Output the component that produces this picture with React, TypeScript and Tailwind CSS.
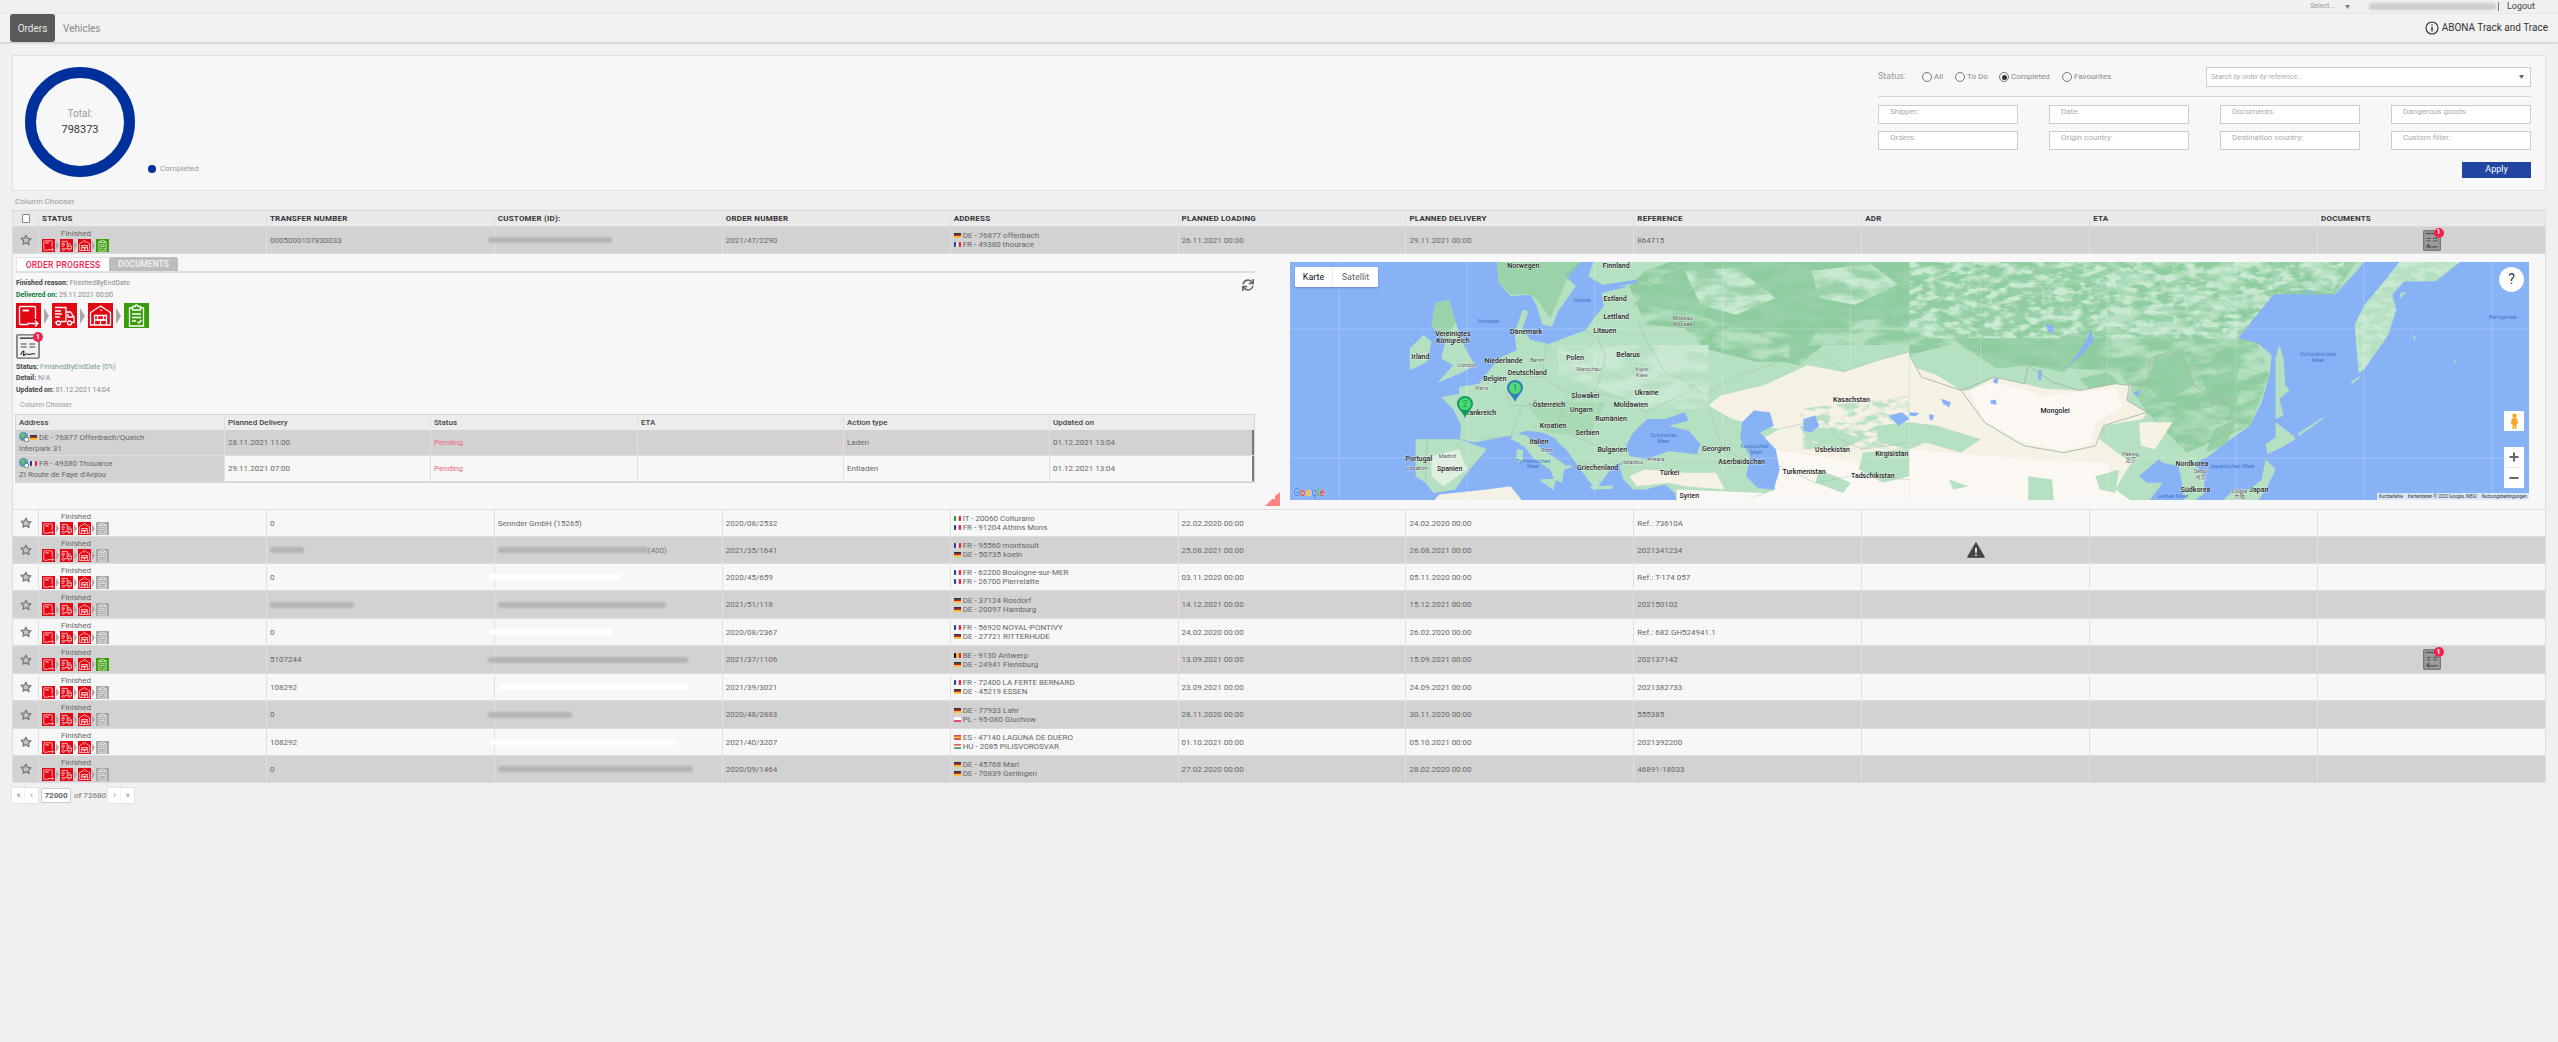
import React from "react";
import { FaSync } from "react-icons/fa";

type Kind = "box" | "truck" | "house" | "clip";

function StepIcon({ kind, color, size }: { kind: Kind; color: string; size: number }) {
  return (
    <svg viewBox="0 0 25 25" width={size} height={size} className="block shrink-0">
      <rect width="25" height="25" fill={color} />
      <g fill="none" stroke="#fff" strokeWidth="1.3">
        {kind === "box" && (
          <>
            <path d="M19.5 16V4.5a1 1 0 0 0-1-1H4.5a1 1 0 0 0-1 1v16a1 1 0 0 0 1 1H12" />
            <path d="M6.5 7.5H13" strokeWidth="1.8" />
            <path d="M11.5 20.5H22M19 17.5l3 3-3 3" />
          </>
        )}
        {kind === "truck" && (
          <>
            <path d="M3 4.5h11v14" />
            <path d="M3 8h6M3 11h7M3 14h5" />
            <path d="M14 9h4.5l3.5 5v5.5h-2M14 18.5H9M3 19.5h1" />
            <circle cx="6.5" cy="20" r="2" />
            <circle cx="17.5" cy="20" r="2" />
            <path d="M16 11v3h5" />
          </>
        )}
        {kind === "house" && (
          <>
            <path d="M2.5 22V9.5L12.5 3l10 6.5V22z" />
            <path d="M6.5 22V12.5h12V22" />
            <path d="M9.5 12.5V17h6v-4.500" />
            <path d="M6.500 17h6v5M12.500 17h6" />
            <path d="M12.500 6.800l1.500 1" />
          </>
        )}
        {kind === "clip" && (
          <>
            <path d="M8.500 5H5.500v18h14V5h-3" />
            <path d="M8.500 3.500h2.500a1.500 1.500 0 0 1 3 0h2.500V7h-8z" />
            <path d="M8 11h9M8 14.500h9M8 18h4M13.500 18.500l1.500 1.500 2.500-3" />
          </>
        )}
      </g>
    </svg>
  );
}

function Chevron({ w, h }: { w: number; h: number }) {
  return (
    <svg viewBox="0 0 5 16" width={w} height={h} className="block shrink-0">
      <path d="M0 0l5 8-5 8z" fill="#a8a8a8" />
    </svg>
  );
}

function StatusCell({ last }: { last: string }) {
  return (
    <div className="flex flex-col pl-[3px] pt-[2px]">
      <div className="ml-[19px] h-[10px] text-[8px] leading-[10px] text-[#666]">Finished</div>
      <div className="flex items-center gap-[1px]">
        <StepIcon kind="box" color="#e30613" size={13} />
        <Chevron w={3} h={9} />
        <StepIcon kind="truck" color="#e30613" size={13} />
        <Chevron w={3} h={9} />
        <StepIcon kind="house" color="#e30613" size={13} />
        <Chevron w={3} h={9} />
        <StepIcon kind="clip" color={last} size={13} />
      </div>
    </div>
  );
}

function Star() {
  return (
    <div className="flex items-center justify-center">
      <svg viewBox="0 0 24 24" width="12" height="12">
        <path
          d="M12 2.500l3 6.300 6.900.9-5 4.800 1.200 6.900L12 17.200 5.900 20.400l1.200-6.900-5-4.800 6.900-.9z"
          fill="#c4c4c4"
          stroke="#777"
          strokeWidth="2.400"
          strokeLinejoin="round"
        />
      </svg>
    </div>
  );
}

function Flag({ c }: { c: string }) {
  const v: Record<string, string[]> = {
    fr: ["#1d3f9e", "#fff", "#e0263a"],
    it: ["#1f9a46", "#fff", "#d8262e"],
    be: ["#111", "#f5d22c", "#d8262e"],
  };
  const h: Record<string, string[]> = {
    de: ["#111", "#d21f1f", "#f5c518"],
    pl: ["#fff", "#fff", "#d8264a"],
    es: ["#d8262e", "#f5c518", "#d8262e"],
    hu: ["#c9463e", "#fff", "#3f8a55"],
  };
  return (
    <svg viewBox="0 0 9 6" width="7" height="5" className="mr-[2px] inline-block shrink-0">
      {v[c] && v[c].map((f, i) => <rect key={i} x={i * 3} width="3" height="6" fill={f} />)}
      {h[c] && h[c].map((f, i) => <rect key={i} y={i * 2} width="9" height="2" fill={f} />)}
    </svg>
  );
}

function Smear({ w, color, ml = 0, suffix }: { w: string; color: string; ml?: string | number; suffix?: string }) {
  return (
    <div className="flex items-center">
      <span className={`${w} ${color} h-[6px] rounded-[3px] blur-[1px]`} style={{ marginLeft: ml as number }} />
      {suffix && <span className="text-[8px] text-[#777]">{suffix}</span>}
    </div>
  );
}

function DocIcon({ w, h, dark }: { w: number; h: number; dark?: boolean }) {
  return (
    <div className="relative inline-block" style={{ width: w, height: h }}>
      <svg viewBox="0 0 25 30" width={w} height={h} preserveAspectRatio="none" className="block">
        <rect x="1" y="1" width="23" height="28" rx="1" fill={dark ? "#9c9c9c" : "#f2f2f2"} stroke="#666" strokeWidth="1.500" />
        <path d="M4 5h17" stroke="#555" strokeWidth="2" />
        <path d="M5 12h6M14 12h6M5 15.500h6M14 15.500h6" stroke="#444" strokeWidth="1.200" />
        <path d="M5 25c2-6 4-6 3-1s3-2 4 0 3-1 8 0" stroke="#222" strokeWidth="1.200" fill="none" />
      </svg>
      <span className="absolute -right-[3px] -top-[2px] flex h-[10px] w-[10px] items-center justify-center rounded-full bg-[#f5204e] text-[7px] font-bold leading-none text-white">
        1
      </span>
    </div>
  );
}

type Row = {
  t?: string;
  tw?: string;
  c?: string;
  cw?: string;
  cc?: string;
  cml?: number;
  s?: string;
  o: string;
  a: [string, string][];
  l: string;
  d: string;
  r: string;
  h: string;
  last: string;
  warn?: boolean;
  doc?: boolean;
};

const gray = "#a8a8a8";
const rows: Row[] = [
  { t: "0", c: "Sennder GmbH (15265)", o: "2020/08/2532", a: [["it", "IT - 20060 Colturano"], ["fr", "FR - 91204 Athins Mons"]], l: "22.02.2020 00:00", d: "24.02.2020 00:00", r: "Ref.: 73610A", h: "h-[27px]", last: gray },
  { tw: "w-[34px]", cw: "w-[150px]", cc: "bg-[#b4b4b4]", s: "(400)", cml: 0, o: "2021/35/1641", a: [["fr", "FR - 95560 montsoult"], ["de", "DE - 50735 koeln"]], l: "25.08.2021 00:00", d: "26.08.2021 00:00", r: "2021341234", h: "h-[27px]", last: gray, warn: true },
  { t: "0", cw: "w-[132px]", cc: "bg-[#ffffff]", cml: -9, o: "2020/45/659", a: [["fr", "FR - 62200 Boulogne-sur-MER"], ["fr", "FR - 26700 Pierrelatte"]], l: "03.11.2020 00:00", d: "05.11.2020 00:00", r: "Ref.: T-174 057", h: "h-[27px]", last: gray },
  { tw: "w-[84px]", cw: "w-[168px]", cc: "bg-[#b4b4b4]", cml: 0, o: "2021/51/118", a: [["de", "DE - 37124 Rosdorf"], ["de", "DE - 20097 Hamburg"]], l: "14.12.2021 00:00", d: "15.12.2021 00:00", r: "202150102", h: "h-[28px]", last: gray },
  { t: "0", cw: "w-[124px]", cc: "bg-[#ffffff]", cml: -10, o: "2020/08/2367", a: [["fr", "FR - 56920 NOYAL-PONTIVY"], ["de", "DE - 27721 RITTERHUDE"]], l: "24.02.2020 00:00", d: "26.02.2020 00:00", r: "Ref.: 682.GH524941.1", h: "h-[27px]", last: gray },
  { t: "5107244", cw: "w-[200px]", cc: "bg-[#b4b4b4]", cml: -10, o: "2021/37/1106", a: [["be", "BE - 9130 Antwerp"], ["de", "DE - 24941 Flensburg"]], l: "13.09.2021 00:00", d: "15.09.2021 00:00", r: "202137142", h: "h-[28px]", last: "#3a9c0c", doc: true },
  { t: "108292", cw: "w-[190px]", cc: "bg-[#ffffff]", cml: 0, o: "2021/39/3021", a: [["fr", "FR - 72400 LA FERTE BERNARD"], ["de", "DE - 45219 ESSEN"]], l: "23.09.2021 00:00", d: "24.09.2021 00:00", r: "2021382733", h: "h-[27px]", last: gray },
  { t: "0", cw: "w-[84px]", cc: "bg-[#b4b4b4]", cml: -10, o: "2020/48/2883", a: [["de", "DE - 77933 Lahr"], ["pl", "PL - 95-080 Gluchow"]], l: "28.11.2020 00:00", d: "30.11.2020 00:00", r: "555385", h: "h-[28px]", last: gray },
  { t: "108292", cw: "w-[188px]", cc: "bg-[#ffffff]", cml: -8, o: "2021/40/3207", a: [["es", "ES - 47140 LAGUNA DE DUERO"], ["hu", "HU - 2085 PILISVOROSVAR"]], l: "01.10.2021 00:00", d: "05.10.2021 00:00", r: "2021392200", h: "h-[27px]", last: gray },
  { t: "0", cw: "w-[195px]", cc: "bg-[#b4b4b4]", cml: 0, o: "2020/09/1464", a: [["de", "DE - 45768 Marl"], ["de", "DE - 70839 Gerlingen"]], l: "27.02.2020 00:00", d: "28.02.2020 00:00", r: "46891-18033", h: "h-[27px]", last: gray },
];

const cols = "grid grid-cols-[25px_repeat(11,minmax(0,1fr))]";
const cell = "flex items-center border-l border-[#dfe0e4] pl-[3px] text-[8px] leading-[9px] text-[#666]";
const cellBlank = "border-l border-[#dfe0e4]";

function Address({ a }: { a: [string, string][] }) {
  return (
    <div className={`${cell} flex-col !items-start justify-center`}>
      {a.map(([f, t]) => (
        <div key={t} className="flex items-center whitespace-nowrap">
          <Flag c={f} />
          {t}
        </div>
      ))}
    </div>
  );
}

function TableRow({ row, dark }: { row: Row; dark: boolean }) {
  return (
    <div className={`${cols} ${row.h} ${dark ? "bg-[#d2d2d2]" : "bg-[#f7f7f7]"} border-b border-[#dcdde2]`}>
      <Star />
      <div className={cellBlank}>
        <StatusCell last={row.last} />
      </div>
      <div className={cell}>{row.tw ? <span className={`${row.tw} h-[6px] rounded-[3px] bg-[#b4b4b4] blur-[1px]`} /> : row.t}</div>
      <div className={cell}>
        {row.c ? row.c : <Smear w={row.cw!} color={row.cc!} ml={row.cml} suffix={row.s} />}
      </div>
      <div className={cell}>{row.o}</div>
      <Address a={row.a} />
      <div className={cell}>{row.l}</div>
      <div className={cell}>{row.d}</div>
      <div className={cell}>{row.r}</div>
      <div className={`${cell} justify-center !pl-0`}>
        {row.warn && (
          <svg viewBox="0 0 24 22" width="18" height="18">
            <path d="M12 1.500L23 20.500H1z" fill="#444" stroke="#444" strokeWidth="1.500" strokeLinejoin="round" />
            <path d="M12 8v6.500M12 16.500v2" stroke="#fff" strokeWidth="2.200" />
          </svg>
        )}
      </div>
      <div className={cellBlank} />
      <div className={`${cell} justify-center !pl-0`}>{row.doc && <DocIcon w={18} h={21} dark />}</div>
    </div>
  );
}

type Label = [string, number, number, "b" | "g" | "w"];
const labels: Label[] = [
  ["Norwegen", 590, 12, "b"], ["Finnland", 825, 12, "b"], ["Ostsee", 738, 117, "w"], ["Estland", 822, 111, "b"],
  ["Lettland", 825, 165, "b"], ["Moskau", 993, 170, "g"], ["Москва", 993, 187, "g"], ["Nordsee", 502, 180, "w"],
  ["Dänemark", 597, 210, "b"], ["Litauen", 796, 208, "b"], ["Vereinigtes", 412, 216, "b"], ["Königreich", 412, 238, "b"],
  ["Irland", 330, 285, "b"], ["Niederlande", 540, 296, "b"], ["Berlin", 625, 296, "g"], ["Polen", 721, 287, "b"],
  ["Belarus", 855, 278, "b"], ["London", 448, 311, "g"], ["Warschau", 755, 322, "g"], ["Kyjiw", 890, 322, "g"],
  ["Kiew", 890, 340, "g"], ["Deutschland", 600, 334, "b"], ["Belgien", 518, 352, "b"], ["Paris", 485, 380, "g"],
  ["Ukraine", 902, 392, "b"], ["Slowakei", 747, 401, "b"], ["Österreich", 655, 429, "b"], ["Moldawien", 862, 429, "b"],
  ["Frankreich", 480, 453, "b"], ["Ungarn", 737, 445, "b"], ["Rumänien", 812, 472, "b"], ["Kroatien", 665, 491, "b"],
  ["Serbien", 752, 514, "b"], ["Schwarzes", 945, 521, "w"], ["Meer", 945, 538, "w"], ["Italien", 630, 540, "b"],
  ["Rom", 650, 565, "g"], ["Bulgarien", 815, 564, "b"], ["Georgien", 1078, 560, "b"], ["Kaspisches", 1175, 555, "w"],
  ["Meer", 1180, 573, "w"], ["Kasachstan", 1420, 413, "b"], ["Usbekistan", 1372, 564, "b"], ["Kirgisistan", 1522, 576, "b"],
  ["Aserbaidschan", 1142, 600, "b"], ["Portugal", 326, 590, "b"], ["Madrid", 398, 584, "g"], ["Spanien", 404, 620, "b"],
  ["Griechenland", 778, 619, "b"], ["Istanbul", 868, 602, "g"], ["Ankara", 925, 594, "g"], ["Türkei", 960, 632, "b"],
  ["Turkmenistan", 1300, 630, "b"], ["Tadschikistan", 1474, 641, "b"], ["Lissabon", 320, 621, "g"],
  ["Tyrrhenisches", 615, 598, "w"], ["Meer", 615, 615, "w"], ["Syrien", 1010, 702, "b"],
  ["Mongolei", 1935, 448, "b"], ["Ochotskisches", 2600, 279, "w"], ["Meer", 2600, 296, "w"], ["Beringmeer", 3068, 168, "w"],
  ["Peking", 2126, 577, "g"], ["北京", 2126, 595, "g"], ["Nordkorea", 2281, 606, "b"], ["Japanisches Meer", 2383, 614, "w"],
  ["Seoul", 2303, 629, "g"], ["서울", 2303, 646, "g"], ["Südkorea", 2290, 683, "b"], ["Osaka", 2401, 690, "g"],
  ["Japan", 2450, 683, "b"], ["大阪", 2401, 704, "g"], ["Gelbes Meer", 2233, 704, "w"],
];

function MapArt() {
  const land = "#b6e0c2";
  const dark = "#8fcda0";
  const lite = "#c9e9d3";
  const sand = "#f5f1e5";
  const pale = "#fbf8f3";
  const sea = "#87b3f6";
  return (
    <svg viewBox="0 0 3136 714" preserveAspectRatio="none" className="absolute -left-[1px] -top-[1px] h-[240px] w-[1241px] blur-[0.6px]">
      <defs>
        <filter id="mottle" x="0" y="0" width="100%" height="100%">
          <feTurbulence type="fractalNoise" baseFrequency="0.012 0.028" numOctaves="4" seed="7" result="n" />
          <feColorMatrix in="n" type="matrix" values="0 0 0 0 0 0 0 0 0 0 0 0 0 0 0 3.500 0 0 0 -1.100" result="a" />
          <feComposite in="SourceGraphic" in2="a" operator="in" />
        </filter>
        <filter id="mottleFine" x="0" y="0" width="100%" height="100%">
          <feTurbulence type="fractalNoise" baseFrequency="0.03 0.05" numOctaves="3" seed="11" result="n" />
          <feColorMatrix in="n" type="matrix" values="0 0 0 0 0 0 0 0 0 0 0 0 0 0 0 4 0 0 0 -1.700" result="a" />
          <feComposite in="SourceGraphic" in2="a" operator="in" />
        </filter>
      </defs>
      <rect width="3136" height="714" fill={sea} />
      <g fill={land}>
        <path d="M760 0H1568V714H980L975 690 950 665 900 680 870 680 845 650 835 610 850 595 820 610 800 640 775 680 755 650 730 610 700 560 660 520 640 510 600 505 560 520 510 530 470 540 432 530 435 490 415 440 385 405 430 395 430 375 480 365 500 335 530 290 575 265 570 215 590 145 605 150 590 200 610 235 650 245 750 205 770 170 795 135 790 95 860 75 800 75 755 45z" />
        <path d="M525 0L530 65 560 105 610 100 625 130 640 190 665 195 680 150 725 75 695 40 740 0z" />
        <path d="M370 125L405 115 420 180 445 260 470 310 440 330 375 362 415 310 385 290 395 240 360 190z" />
        <path d="M305 260L340 220 360 240 350 300 305 325z" />
        <path d="M320 530L430 530 500 560 450 630 420 680 365 690 345 660 320 640z" />
        <path d="M570 510L600 520 640 560 690 600 718 612 695 620 690 660 670 650 660 620 620 590 590 545 560 530z" />
        <path d="M632 650L675 648 668 682z" />
        <path d="M586 520L596 525 594 550 584 548zM575 560L592 562 590 600 575 598z" />
        <path d="M760 670L820 668 815 678 765 680z" />
      </g>
      <path d="M365 714L380 695 500 680 560 670 590 714z" fill={sand} />
      <path d="M360 580L430 560 450 620 390 670 360 640z" fill={pale} opacity="0.6" />
      <g fill={dark}>
        <path d="M525 0H740L700 60 660 170 630 120 610 100 560 100 530 65z" opacity="0.7" />
        <path d="M370 125L405 115 420 180 395 240 360 190z" opacity="0.7" />
        <path d="M600 420H800L760 520 650 510z" opacity="0.35" />
      </g>
      <path d="M870 130L900 90 960 60 1000 0H1568V170L1450 175 1340 190 1290 300 1265 300 1262 215 1150 200 1060 170 1000 150z" fill={dark} opacity="0.75" />
      <g fill={dark} filter="url(#mottle)">
        <path d="M860 75L900 30 970 0H1568V250L1350 250 1290 310 1250 300 1180 300 1050 260 1000 200 900 190z" />
      </g>
      <g fill={lite} filter="url(#mottle)">
        <path d="M1000 30L1130 20 1230 110 1130 160 1040 130z" />
        <path d="M1320 30L1470 10 1540 70 1430 130 1340 110z" />
        <path d="M680 250H1060V440H900L790 380 680 340z" />
      </g>
      <path d="M1568 270L1490 295 1400 330 1310 310 1200 370 1090 400 1060 430 1120 470 1190 490 1240 500 1180 540 1240 610 1230 680 1200 700 1150 714H1568z" fill={sand} />
      <path d="M1210 560L1330 580 1450 600 1568 560V714H1150L1230 680z" fill={pale} />
      <path d="M860 640L900 620 1000 630 1080 630 1100 680 1000 670 960 660 880 670z" fill={sand} />
      <path d="M980 680L1200 690 1150 714H980z" fill={pale} />
      <g fill={land}>
        <path d="M1290 490L1380 500 1450 530 1400 560 1310 530z" />
        <path d="M1450 570L1568 560V640L1500 660 1440 620z" />
        <path d="M1480 490L1568 480V560L1490 540z" />
        <path d="M1340 620L1420 660 1400 690 1330 660z" />
        <path d="M1000 600L1090 590 1110 650 1060 620z" />
      </g>
      <g fill={land} filter="url(#mottleFine)">
        <path d="M1290 440L1568 400V560H1300z" />
      </g>
      <g fill={sea}>
        <path d="M1145 480L1175 445 1215 450 1225 490 1190 510 1230 560 1240 620 1225 680 1185 675 1155 640 1165 580 1140 530z" />
        <path d="M1300 470L1330 460 1340 490 1320 510 1300 505z" />
        <path d="M1515 460L1550 450 1568 470 1540 490z" />
        <path d="M870 510L905 470 950 470 1000 450 1010 475 960 490 1010 505 1040 545 1030 575 960 565 905 590 860 580 852 550z" />
        <path d="M650 250L720 80 745 90 710 170 770 75 880 55 880 65 790 85 765 150 750 205z" />
        <path d="M640 530L670 525 725 600 700 610z" />
        <path d="M755 50L770 0H760L745 45z" />
      </g>

      <g transform="translate(1568,0)">
        <path d="M0 0H1150L1130 30 1075 100 1000 85 920 100 870 170 830 230 880 245 915 280 910 340 890 420 860 490 800 540 750 585 720 600 745 640 745 690 720 714H695L690 670 680 610 640 600 630 590 580 640 600 660 640 660 605 714H0z" fill={land} />
        <g fill={land}>
          <path d="M935 250L945 290 950 370 960 385 935 410 945 460 925 470 925 400 925 290z" />
          <path d="M925 480L970 520 975 530 940 555 905 575 900 545 925 525z" />
          <path d="M900 590L925 620 905 670 880 714H790L820 680 860 680 890 650z" />
          <path d="M1240 0L1200 60 1150 130 1125 190 1135 335 1150 320 1210 220 1230 145 1220 100 1250 60 1330 60 1395 0z" />
          <path d="M980 515L1050 462 1045 470 985 520zM1115 360L1140 340 1135 350 1118 365z" />
          <path d="M1240 95L1255 92 1240 112zM1270 215L1280 230 1275 235zM1370 285L1385 305 1380 305z" />
        </g>
        <path d="M0 0H500L530 110 450 190 470 260 390 330 300 310 220 320 120 240 60 175 0 170z" fill={dark} opacity="0.75" />
        <g fill={dark}>
          <path d="M430 350L500 330 530 360 460 390z" opacity="0.8" />
          <path d="M620 280L690 270 720 370 640 420 600 370z" opacity="0.8" />
          <path d="M740 350L830 320 830 420 760 430z" opacity="0.8" />
          <path d="M770 500L830 470 800 545 750 570z" opacity="0.8" />
        </g>
        <g fill={dark} filter="url(#mottle)">
          <path d="M0 0H1130L1075 100 920 100 870 170 830 230 880 245 910 340 860 490 700 570 600 450 530 330 300 310 100 250 0 280z" />
        </g>
        <g fill={lite} filter="url(#mottleFine)">
          <path d="M0 0H1100L1070 95 1000 85 920 100 870 170 830 230H0z" />
          <path d="M1240 0L1200 60 1150 130 1125 190 1135 335 1150 320 1210 220 1230 145 1220 100 1250 60 1330 60 1395 0z" />
        </g>
        <path d="M0 280L20 320 70 340 130 385 150 385 215 345 290 365 340 380 430 385 520 365 560 370 550 415 600 450 590 470 490 490 480 530 560 600 520 680 560 714H0z" fill={sand} />
        <path d="M150 385L215 360 340 400 520 380 540 430 470 480 460 540 390 565 290 540 190 480z" fill={pale} />
        <path d="M0 560L300 590 500 600 520 680 560 714H0z" fill={pale} />
        <path d="M580 480L665 480 620 560 585 550z" fill={sand} />
        <g fill={land}>
          <path d="M0 480L70 490 180 530 130 570 40 540 0 560z" />
          <path d="M300 640L360 650 365 714H300z" />
          <path d="M100 650L150 670 110 680z" />
          <path d="M470 640L530 620 520 690 480 680z" />
        </g>
        <path d="M460 205L465 240 430 285 385 325 410 300 440 250z" fill={sea} />
        <g fill={sea}>
          <path d="M212 350L225 348 222 365 212 362z" />
          <path d="M205 415L218 412 220 428 205 425zM80 410L105 420 100 435 85 425z" />
          <path d="M0 450L25 452 15 462 0 460zM50 455L62 460 58 475 50 470z" />
          <path d="M345 190L362 190 365 215 350 210z" />
          <path d="M565 390L585 385 575 405z" />
          <path d="M325 325L335 325 333 355 325 350z" />
        </g>
        <g fill="none" stroke="#a4b8a6" strokeWidth="2.500">
          <path d="M190 480L260 530 290 550 390 570 470 550 490 490 600 450 550 415 555 370 600 365 610 290 660 268 700 300 720 370 765 405 765 425 825 405 800 500 750 560" />
          <path d="M0 280L30 345 130 385 190 480" />
          <path d="M130 385L215 345 290 365 300 310 360 360 430 385 520 365 555 370" />
        </g>
      </g>

      <g fill="none" stroke="#a0b5a2" strokeWidth="1.500" opacity="0.8">
        <path d="M1568 270L1490 295 1400 330 1330 260 1120 350 1050 400 1020 370 950 330 900 230 880 170" />
        <path d="M650 245L640 345 700 390 770 390 790 340 800 280 780 230 750 205" />
        <path d="M640 345L580 340 550 390 560 430 600 430 700 420 770 390 850 410 900 450 1010 390" />
        <path d="M700 420L680 480 720 520 800 560 860 560" />
        <path d="M1060 430L1090 540 1140 590 1180 540" />
        <path d="M1240 500L1350 470 1390 530 1450 560 1568 540" />
        <path d="M1240 610L1330 660 1420 640 1568 650" />
        <path d="M350 530L345 660" />
        <path d="M480 530L560 520 590 430" />
      </g>
      <g stroke="#fff" strokeWidth="2" opacity="0.25">
        <path d="M127 0V714M450 0V714M773 0V714M1096 0V714M1419 0V714M1748 0V714M2068 0V714M2393 0V714M2716 0V714M3040 0V714" />
        <path d="M0 202H3136M0 586H3136" />
      </g>
    </svg>
  );
}

function MapLabels() {
  return (
    <svg viewBox="0 0 1239 238" className="absolute inset-0 h-full w-full">
      {labels.map(([t, x, y, k], i) => (
        <text
          key={i}
          x={x / 2.529}
          y={y / 3}
          textAnchor="middle"
          dominantBaseline="middle"
          fontSize={k === "b" ? 7 : 5.5}
          fontWeight={k === "b" ? 500 : 400}
          fill={k === "b" ? "#222" : k === "g" ? "#555" : "#3f76cf"}
          stroke={k === "w" ? "none" : "#ffffff"}
          strokeOpacity="0.55"
          strokeWidth="1"
          paintOrder="stroke"
        >
          {t}
        </text>
      ))}
    </svg>
  );
}

function Pin({ n, color, className }: { n: string; color: string; className: string }) {
  return (
    <div className={`absolute ${className}`}>
      <svg viewBox="0 0 16 22" width="16" height="22" className="block">
        <path d="M8 22C6 16 0 13 0 7.500a8 7.500 0 0 1 16 0C16 13 10 16 8 22z" fill={color} />
        <circle cx="8" cy="8" r="6" fill="#4fdc6e" />
        <text x="8" y="11" textAnchor="middle" fontSize="9" fill={color}>
          {n}
        </text>
      </svg>
    </div>
  );
}

function GMap() {
  return (
    <div className="relative h-[238px] w-[1239px] overflow-hidden bg-[#87b3f6]">
      <MapArt />
      <MapLabels />
      <Pin n="1" color="#2f7fc0" className="left-[217px] top-[118px]" />
      <Pin n="2" color="#129a62" className="left-[167px] top-[134px]" />
      <div className="absolute left-[5px] top-[5px] flex h-[20px] w-[83px] rounded-[1px] bg-white text-[9px] leading-[20px] shadow-[0_1px_2px_rgba(0,0,0,0.25)]">
        <div className="w-[38px] border-r border-[#eee] text-center text-[#111]">Karte</div>
        <div className="flex-1 text-center text-[#666]">Satellit</div>
      </div>
      <div className="absolute left-[1209px] top-[5px] flex h-[25px] w-[25px] items-center justify-center rounded-full bg-white text-[14px] text-[#333]">?</div>
      <div className="absolute left-[1214px] top-[149px] flex h-[20px] w-[20px] items-center justify-center bg-white">
        <svg viewBox="0 0 10 18" width="9" height="16">
          <circle cx="5" cy="3" r="2.500" fill="#f5a623" />
          <path d="M2 6h6l1 6H7.500L7 18H5.500L5 13l-.5 5H3l-.5-6H1z" fill="#f5a623" />
        </svg>
      </div>
      <div className="absolute left-[1214px] top-[185px] flex h-[41px] w-[20px] flex-col items-center bg-white">
        <svg viewBox="0 0 20 20" width="20" height="20">
          <path d="M10 5.500v9M5.500 10h9" stroke="#666" strokeWidth="2" />
        </svg>
        <div className="h-px w-[14px] bg-[#e6e6e6]" />
        <svg viewBox="0 0 20 20" width="20" height="20">
          <path d="M5.500 10h9" stroke="#666" strokeWidth="2" />
        </svg>
      </div>
      <div className="absolute bottom-0 right-0 flex h-[7px] items-center gap-[5px] whitespace-nowrap bg-white/70 px-[2px] text-[4.500px] leading-[7px] text-[#333]">
        <span>Kurzbefehle</span>
        <span>Kartendaten © 2022 Google, INEGI</span>
        <span>Nutzungsbedingungen</span>
      </div>
      <div className="absolute bottom-[2px] left-[3px] text-[10px] font-medium leading-[10px] [text-shadow:0_0_1px_#fff]">
        <span className="text-[#4285f4]">G</span>
        <span className="text-[#ea4335]">o</span>
        <span className="text-[#fbbc05]">o</span>
        <span className="text-[#4285f4]">g</span>
        <span className="text-[#34a853]">l</span>
        <span className="text-[#ea4335]">e</span>
      </div>
    </div>
  );
}

function Radio({ label, w, on }: { label: string; w: string; on?: boolean }) {
  return (
    <div className={`flex items-center ${w}`}>
      <span className="mr-[2px] flex h-[10px] w-[10px] items-center justify-center rounded-full border border-[#777]">
        {on && <span className="h-[5px] w-[5px] rounded-full bg-[#333]" />}
      </span>
      <span className="text-[8px] text-[#888]">{label}</span>
    </div>
  );
}

function Field({ label }: { label: string }) {
  return (
    <div className="h-[19px] w-[140px] border border-[#ccc] bg-white pl-[11px] text-[8px] leading-[12px] text-[#aaa]">{label}</div>
  );
}

const innerCols = "grid grid-cols-[208px_206px_207px_206px_206px_1fr]";
const innerCell = "flex items-center border-l border-[#dfe0e4] pl-[3px]";

function InnerAddr({ flag, top, bottom }: { flag: string; top: string; bottom: string }) {
  return (
    <div className="flex flex-col justify-center gap-[2px] bg-[#d2d2d2] pl-[3px] text-[8px] leading-[9px] text-[#666]">
      <div className="flex items-center whitespace-nowrap">
        <svg viewBox="0 0 10 10" width="10" height="10" className="mr-[1px] shrink-0">
          <circle cx="4.500" cy="4.500" r="4.500" fill="#4f9fb0" />
          <path d="M1 3l3-2 2 2-2 3z" fill="#7dbb6a" />
          <circle cx="7.500" cy="7.500" r="2.300" fill="#fff" stroke="#555" strokeWidth="0.700" />
        </svg>
        <Flag c={flag} />
        {top}
      </div>
      <div>{bottom}</div>
    </div>
  );
}

function InnerRow({ dark, addr, date, action }: { dark: boolean; addr: React.ReactNode; date: string; action: string }) {
  return (
    <div className={`${innerCols} h-[26px] border-b border-[#dcdde2] text-[8px] text-[#666] ${dark ? "bg-[#d2d2d2]" : "bg-[#f7f7f7]"}`}>
      {addr}
      <div className={innerCell}>{date}</div>
      <div className={`${innerCell} text-[#f0677f]`}>Pending</div>
      <div className={innerCell} />
      <div className={innerCell}>{action}</div>
      <div className={`${innerCell} border-r-[2px] border-r-[#7a7a7a]`}>01.12.2021 13:04</div>
    </div>
  );
}

function OrderProgress() {
  return (
    <div className="flex h-[256px] border-b border-[#dcdde2] bg-[#f7f7f7]">
      <div className="ml-[2px] w-[1240px] pt-[3px]">
        <div className="flex h-[16px] items-stretch border-b-2 border-[#dfdfe3]">
          <div className="ml-[1px] w-[93px] border-l border-t border-[#e6e6e6] bg-white text-center text-[8.500px] font-medium leading-[14px] tracking-[0.2px] text-[#f5204e]">ORDER PROGRESS</div>
          <div className="w-[69px] rounded-t-[2px] bg-[#bdbdbd] text-center text-[8.500px] font-bold leading-[14px] text-[#eee]">DOCUMENTS</div>
        </div>
        <div className="flex items-start justify-between pl-[1px] pr-[1px]">
          <div className="text-[7px] text-[#888]">
            <div className="mt-[5px] h-[11px] leading-[11px]">
              <span className="font-bold text-[#444]">Finished reason: </span>FinishedByEndDate
            </div>
            <div className="mt-[1px] h-[11px] leading-[11px]">
              <span className="font-bold text-[#0b7a3b]">Delivered on: </span>29.11.2021 00:00
            </div>
            <div className="mt-[2px] flex items-center gap-[3px]">
              <StepIcon kind="box" color="#e30613" size={25} />
              <Chevron w={5} h={16} />
              <StepIcon kind="truck" color="#e30613" size={25} />
              <Chevron w={5} h={16} />
              <StepIcon kind="house" color="#e30613" size={25} />
              <Chevron w={5} h={16} />
              <StepIcon kind="clip" color="#3a9c0c" size={25} />
            </div>
            <div className="mt-[6px] h-[25px]">
              <DocIcon w={24} h={25} />
            </div>
            <div className="mt-[3px] h-[11px] leading-[11px]">
              <span className="font-bold text-[#444]">Status: </span>
              <span className="text-[#6f9d88]">FinishedByEndDate (0%)</span>
            </div>
            <div className="h-[11px] leading-[11px]">
              <span className="font-bold text-[#444]">Detail: </span>
              <span className="text-[#7d8fa8]">N/A</span>
            </div>
            <div className="h-[12px] leading-[12px]">
              <span className="font-bold text-[#444]">Updated on: </span>01.12.2021 14:04
            </div>
          </div>
          <div className="mt-[6px] text-[#666]">
            <FaSync size={12} />
          </div>
        </div>
        <div className="mt-[5px] h-[9px] pl-[5px] text-[7px] leading-[9px] text-[#999]">Column Chooser</div>
        <div className="mt-[4px] border border-[#d4d4d8]">
          <div className={`${innerCols} h-[15px] items-stretch bg-[#ececec] text-[8px] font-medium leading-[15px] text-[#444]`}>
            <div className="pl-[3px]">Address</div>
            <div className="border-l border-[#dfe0e4] pl-[3px]">Planned Delivery</div>
            <div className="border-l border-[#dfe0e4] pl-[3px]">Status</div>
            <div className="border-l border-[#dfe0e4] pl-[3px]">ETA</div>
            <div className="border-l border-[#dfe0e4] pl-[3px]">Action type</div>
            <div className="border-l border-[#dfe0e4] pl-[3px]">Updated on</div>
          </div>
          <InnerRow dark addr={<InnerAddr flag="de" top="DE - 76877 Offenbach/Queich" bottom="Interpark 31" />} date="28.11.2021 11:00" action="Laden" />
          <InnerRow dark={false} addr={<InnerAddr flag="fr" top="FR - 49380 Thouarce" bottom="ZI Route de Faye d'Anjou" />} date="29.11.2021 07:00" action="Entladen" />
        </div>
      </div>
      <div className="flex w-[35px] flex-col items-center justify-end pb-[3px]">
        <svg viewBox="0 0 15 14" width="15" height="14" className="block">
          <path d="M15 0V14H0L7 7H10V4z" fill="#ff8484" />
        </svg>
      </div>
      <div className="pt-[8px]">
        <GMap />
      </div>
    </div>
  );
}

function PagerBtn({ t }: { t: string }) {
  return (
    <div className="flex h-[15px] w-[13px] items-center justify-center bg-white text-[9px] leading-none text-[#888] shadow-[0_0_1px_rgba(0,0,0,0.3)]">{t}</div>
  );
}

export default function App() {
  const headers = ["STATUS", "TRANSFER NUMBER", "CUSTOMER (ID):", "ORDER NUMBER", "ADDRESS", "PLANNED LOADING", "PLANNED DELIVERY", "REFERENCE", "ADR", "ETA", "DOCUMENTS"];
  return (
    <div className="h-[1042px] overflow-hidden bg-[#f0f0f0] font-[Roboto,'Noto_Sans_CJK_SC',sans-serif]">
      <div className="flex h-[14px] items-center justify-end border-b border-[#eaeaea] pr-[23px]">
        <span className="text-[7px] text-[#999]">Select...</span>
        <span className="ml-[10px] text-[5px] text-[#777]">▼</span>
        <span className="ml-[19px] h-[7px] w-[127px] rounded-[3px] bg-[#cfcfcf] blur-[1px]" />
        <span className="ml-[2px] h-[9px] w-px bg-[#777]" />
        <span className="ml-[8px] text-[9px] leading-none text-[#444]">Logout</span>
      </div>
      <div className="flex h-[28px] items-stretch justify-between bg-[#f2f2f2] shadow-[0_1px_2px_rgba(0,0,0,0.18)]">
        <div className="flex items-stretch">
          <div className="ml-[10px] flex w-[45px] items-center justify-center rounded-[3px] bg-[#5a5a5a] text-[10px] text-[#e8e8e8]">Orders</div>
          <div className="ml-[8px] flex items-center text-[10px] text-[#888]">Vehicles</div>
        </div>
        <div className="flex items-center gap-[2px] pb-[1px] pr-[10px]">
          <svg viewBox="0 0 14 14" width="14" height="14" className="mr-[1px]">
            <circle cx="7" cy="7" r="6" fill="none" stroke="#333" strokeWidth="1.100" />
            <path d="M7 6v4.500M7 3.500v1.300" stroke="#333" strokeWidth="1.400" />
          </svg>
          <span className="text-[10px] text-[#333]">ABONA Track and Trace</span>
        </div>
      </div>

      <div className="mx-[12px] mt-[13px] flex h-[136px] justify-between border border-[#e0e0e0] bg-[#f7f7f7] pl-[12px] pr-[14px]">
        <div className="flex items-end pb-[13px] pt-[12px]">
          <div className="relative h-[110px] w-[110px]">
            <svg viewBox="0 0 110 110" width="110" height="110" className="block">
              <circle cx="55" cy="55" r="49.500" fill="none" stroke="#00309c" strokeWidth="11" />
            </svg>
            <div className="absolute inset-0 flex flex-col items-center justify-center gap-[3px]">
              <span className="text-[10px] leading-[12px] text-[#999]">Total:</span>
              <span className="text-[11px] leading-[13px] text-[#333]">798373</span>
            </div>
          </div>
          <div className="mb-[2px] ml-[13px] flex items-center gap-[4px] text-[8px] text-[#999]">
            <span className="h-[8px] w-[8px] rounded-full bg-[#00309c]" />
            Completed
          </div>
        </div>
        <div className="w-[653px] pt-[11px]">
          <div className="flex h-[20px] items-center justify-between">
            <div className="flex items-center">
              <span className="w-[44px] text-[9px] text-[#999]">Status:</span>
              <Radio label="All" w="w-[33px]" />
              <Radio label="To Do" w="w-[44px]" />
              <Radio label="Completed" w="w-[63px]" on />
              <Radio label="Favourites" w="w-[60px]" />
            </div>
            <div className="flex h-[20px] w-[325px] items-center justify-between border border-[#ccc] bg-white pl-[4px] pr-[6px] text-[7px] italic text-[#aaa]">
              Search by order by reference...
              <span className="not-italic text-[5px] text-[#666]">▼</span>
            </div>
          </div>
          <div className="mt-[9px] h-px bg-[#d4d4d4]" />
          <div className="mt-[8px] flex justify-between">
            <Field label="Shipper:" />
            <Field label="Date:" />
            <Field label="Documents:" />
            <Field label="Dangerous goods:" />
          </div>
          <div className="mt-[7px] flex justify-between">
            <Field label="Orders:" />
            <Field label="Origin country:" />
            <Field label="Destination country:" />
            <Field label="Custom filter:" />
          </div>
          <div className="mt-[12px] flex justify-end">
            <div className="flex h-[16px] w-[69px] items-center justify-center bg-[#2046a2] text-[9px] text-white">Apply</div>
          </div>
        </div>
      </div>

      <div className="ml-[15px] mt-[6px] h-[13px] text-[8px] leading-[9px] text-[#999]">Column Chooser</div>

      <div className="mx-[12px] border-x border-[#dcdde2]">
        <div className={`${cols} h-[17px] border-y border-[#d8d8dc] bg-[#e9e9e9]`}>
          <div className="flex items-center justify-center">
            <span className="h-[9px] w-[8px] rounded-[1px] border border-[#888] bg-white" />
          </div>
          {headers.map((h) => (
            <div key={h} className="flex items-center border-l border-[#dfe0e4] pl-[3px] text-[8px] font-bold tracking-[0.2px] text-[#333]">
              {h}
            </div>
          ))}
        </div>
        <div className={`${cols} h-[27px] border-b border-[#dcdde2] bg-[#d2d2d2]`}>
          <Star />
          <div className={cellBlank}>
            <StatusCell last="#3a9c0c" />
          </div>
          <div className={cell}>0005000107830033</div>
          <div className={cell}>
            <Smear w="w-[124px]" color="bg-[#b4b4b4]" ml={-10} />
          </div>
          <div className={cell}>2021/47/2290</div>
          <Address a={[["de", "DE - 76877 offenbach"], ["fr", "FR - 49380 thourace"]]} />
          <div className={cell}>26.11.2021 00:00</div>
          <div className={cell}>29.11.2021 00:00</div>
          <div className={cell}>864715</div>
          <div className={cellBlank} />
          <div className={cellBlank} />
          <div className={`${cell} justify-center !pl-0`}>
            <DocIcon w={18} h={21} dark />
          </div>
        </div>
        <OrderProgress />
        {rows.map((r, i) => (
          <TableRow key={r.o} row={r} dark={i % 2 === 1} />
        ))}
      </div>

      <div className="ml-[12px] mt-[5px] flex items-center">
        <PagerBtn t="«" />
        <PagerBtn t="‹" />
        <div className="ml-[3px] flex h-[15px] w-[30px] items-center justify-center rounded-[1px] border border-[#ccc] bg-white text-[8px] font-bold text-[#666]">72000</div>
        <div className="ml-[3px] w-[34px] text-[8px] font-medium text-[#888]">of 72680</div>
        <PagerBtn t="›" />
        <PagerBtn t="»" />
      </div>
    </div>
  );
}
